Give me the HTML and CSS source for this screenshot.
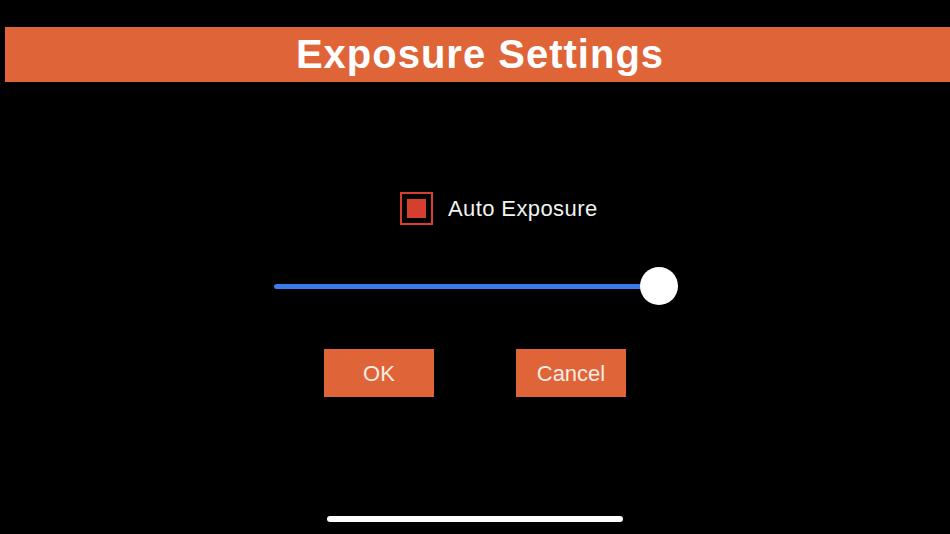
FILE: index.html
```html
<!DOCTYPE html>
<html>
<head>
<meta charset="utf-8">
<link rel="stylesheet" href="styles.css">
</head>
<body>
<div class="screen">
  <header class="title-bar"><h1 class="title">Exposure Settings</h1></header>
  <main class="content">
    <label class="check-row">
      <span class="checkbox"><span class="checkbox-fill"></span></span>
      <span class="check-label">Auto Exposure</span>
    </label>
    <div class="slider">
      <div class="slider-track"></div>
      <div class="slider-thumb"></div>
    </div>
    <div class="buttons">
      <button class="btn">OK</button>
      <button class="btn">Cancel</button>
    </div>
  </main>
  <div class="home-indicator"></div>
</div>
</body>
</html>
```

FILE: styles.css
```css
html, body {
  margin: 0;
  padding: 0;
  background: #000;
}
body {
  font-family: "Liberation Sans", Arial, sans-serif;
  color: #fff;
}
.screen {
  position: relative;
  width: 950px;
  height: 534px;
  overflow: hidden;
  background: #000;
}
.title-bar {
  margin: 27px 0 0 5px;
  height: 55px;
  background: #df6438;
  display: flex;
  align-items: center;
  justify-content: center;
}
.title {
  margin: 0 0 0 5px;
  font-size: 40px;
  font-weight: 700;
  letter-spacing: 1px;
  line-height: 55px;
  color: #fff;
}
.content {
  display: flex;
  flex-direction: column;
  align-items: center;
}
.check-row {
  align-self: flex-start;
  margin: 110px 0 0 400px;
  display: flex;
  align-items: center;
  gap: 15px;
}
.checkbox {
  box-sizing: border-box;
  width: 33px;
  height: 33px;
  border: 2px solid #d63f2e;
  display: flex;
  align-items: center;
  justify-content: center;
}
.checkbox-fill {
  width: 19px;
  height: 19px;
  background: #d63f2e;
}
.check-label {
  font-size: 22px;
  letter-spacing: 0.4px;
  color: #f2f2f2;
}
.slider {
  position: relative;
  width: 404px;
  height: 38px;
  margin-top: 42px;
  margin-left: 1px;
  display: flex;
  align-items: center;
}
.slider-track {
  width: 100%;
  height: 5px;
  border-radius: 3px;
  background: #3a7bea;
  margin-right: 18px;
}
.slider-thumb {
  position: absolute;
  right: 0;
  top: 0;
  width: 38px;
  height: 38px;
  border-radius: 50%;
  background: #fff;
}
.buttons {
  display: flex;
  gap: 82px;
  margin-top: 44px;
}
.btn {
  width: 110px;
  height: 48px;
  border: 0;
  padding: 0;
  background: #df6438;
  color: #f7ece4;
  font-family: "Liberation Sans", Arial, sans-serif;
  font-size: 22px;
  line-height: 50px;
}
.home-indicator {
  position: absolute;
  left: 327px;
  bottom: 12px;
  width: 296px;
  height: 6px;
  border-radius: 3px;
  background: #fff;
}
```
